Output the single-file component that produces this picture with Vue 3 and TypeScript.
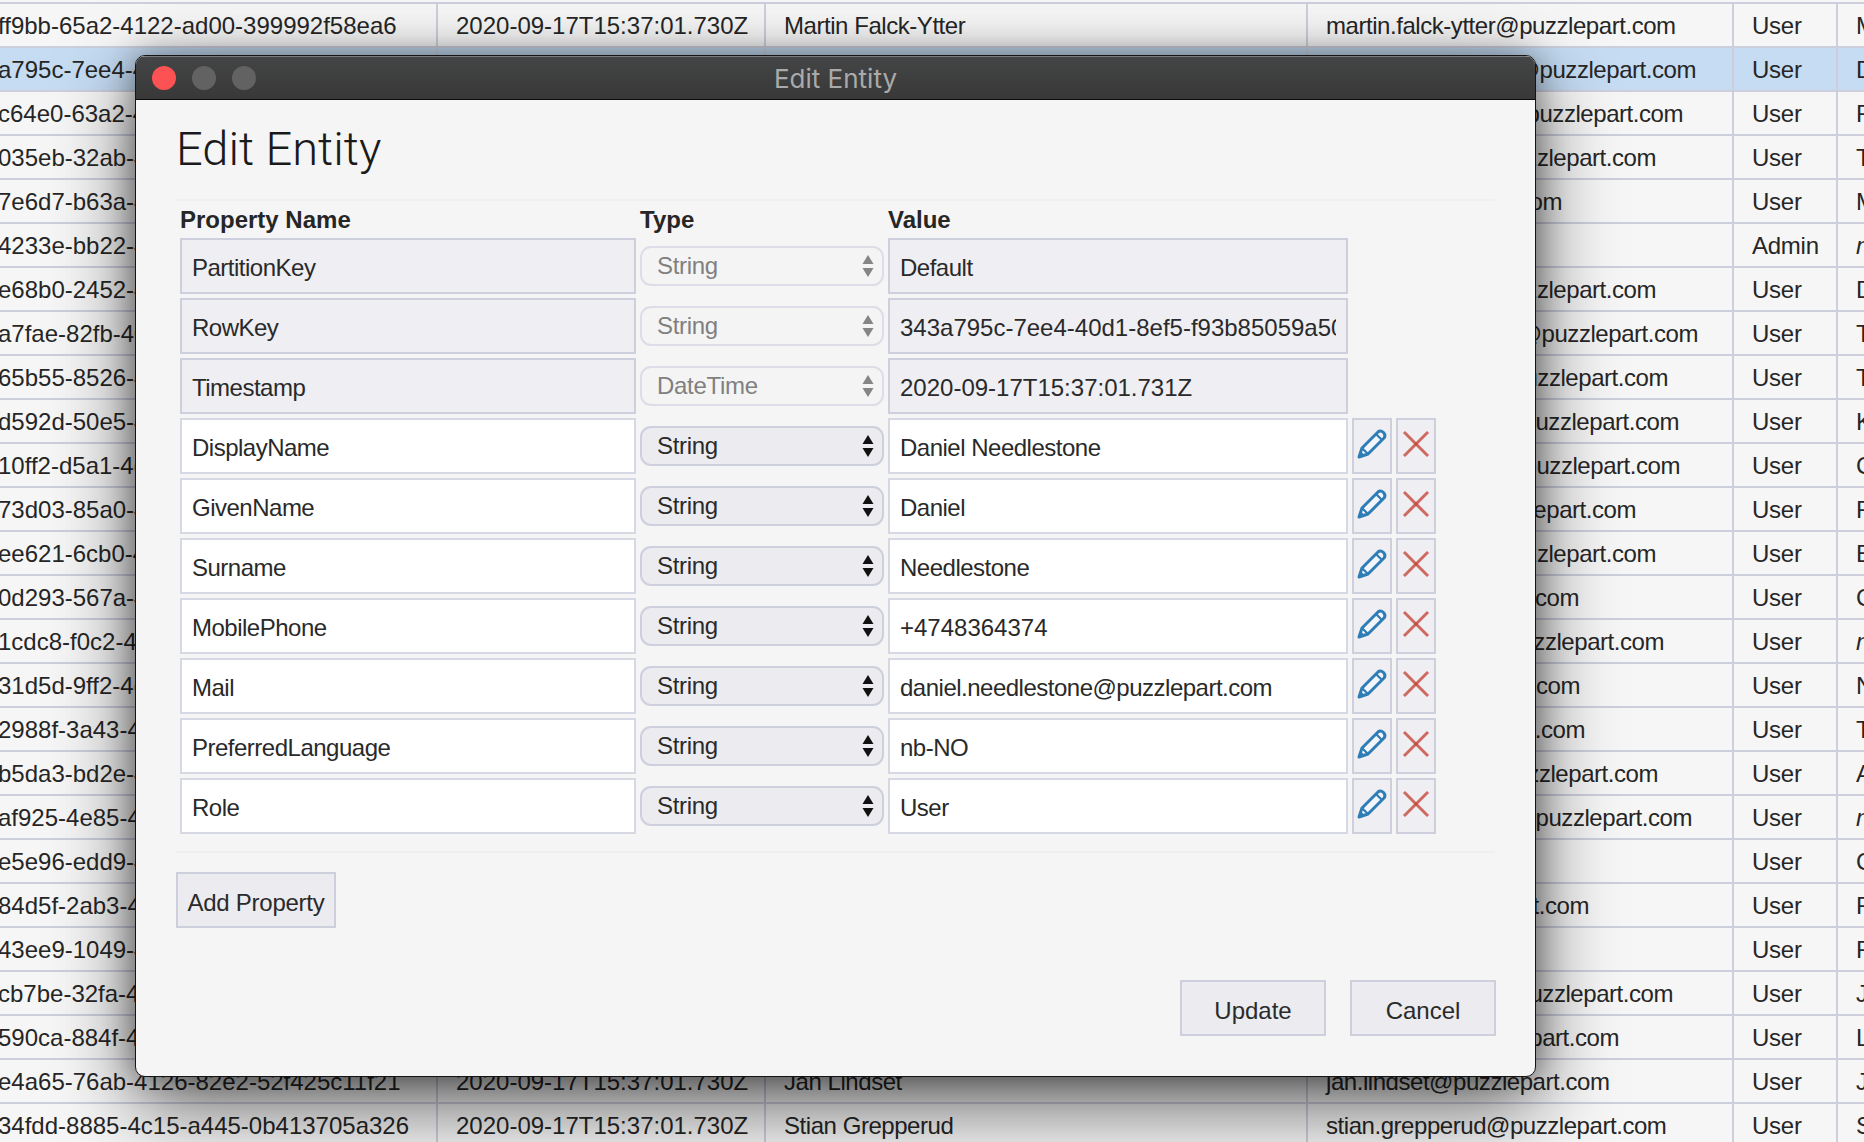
<script setup lang="ts">
interface Row { id: string; name?: string; mail?: string; mailEnd?: number; role?: string; next: string; italic?: boolean }
interface Prop { name: string; type: string; value: string; locked?: boolean; digits?: boolean }

const stamp = "2020-09-17T15:37:01.730Z";
const COL_MAIL_RIGHT = 1732;

// 表格被横向滚动过，第一列只露出 GUID 的后半段；邮箱大多被弹窗挡住，只按右端对齐
const rows: Row[] = [
  { id: "ff9bb-65a2-4122-ad00-399992f58ea6", name: "Martin Falck-Ytter", mail: "martin.falck-ytter@puzzlepart.com", next: "Martin" },
  { id: "a795c-7ee4-40d1", name: "Daniel Needlestone", mail: "@puzzlepart.com", mailEnd: 1696, next: "Daniel" },
  { id: "c64e0-63a2-4d1", mail: "@puzzlepart.com", mailEnd: 1683, next: "F" },
  { id: "035eb-32ab-4d1", mail: "@puzzlepart.com", mailEnd: 1656, next: "T" },
  { id: "7e6d7-b63a-4d1", mail: "@puzzlepart.com", mailEnd: 1562, next: "M" },
  { id: "4233e-bb22-4d1", role: "Admin", next: "null", italic: true },
  { id: "e68b0-2452-4d1", mail: "@puzzlepart.com", mailEnd: 1656, next: "D" },
  { id: "a7fae-82fb-40d", mail: "@puzzlepart.com", mailEnd: 1698, next: "T" },
  { id: "65b55-8526-4d1", mail: "@puzzlepart.com", mailEnd: 1668, next: "T" },
  { id: "d592d-50e5-4d1", mail: "@puzzlepart.com", mailEnd: 1679, next: "K" },
  { id: "10ff2-d5a1-4d1", mail: "@puzzlepart.com", mailEnd: 1680, next: "C" },
  { id: "73d03-85a0-4d1", mail: "@puzzlepart.com", mailEnd: 1636, next: "F" },
  { id: "ee621-6cb0-4d1", mail: "@puzzlepart.com", mailEnd: 1656, next: "E" },
  { id: "0d293-567a-4d1", mail: "@puzzlepart.com", mailEnd: 1579, next: "C" },
  { id: "1cdc8-f0c2-4d1", mail: "@puzzlepart.com", mailEnd: 1664, next: "null", italic: true },
  { id: "31d5d-9ff2-4d1", mail: "@puzzlepart.com", mailEnd: 1580, next: "N" },
  { id: "2988f-3a43-4d1", mail: "@puzzlepart.com", mailEnd: 1585, next: "T" },
  { id: "b5da3-bd2e-4d1", mail: "@puzzlepart.com", mailEnd: 1658, next: "A" },
  { id: "af925-4e85-4d1", mail: "@puzzlepart.com", mailEnd: 1692, next: "null", italic: true },
  { id: "e5e96-edd9-4d1", next: "C" },
  { id: "84d5f-2ab3-4d1", mail: "@puzzlepart.com", mailEnd: 1589, next: "F" },
  { id: "43ee9-1049-4d1", next: "F" },
  { id: "cb7be-32fa-4d1", mail: "@puzzlepart.com", mailEnd: 1673, next: "J" },
  { id: "590ca-884f-4d1", mail: "@puzzlepart.com", mailEnd: 1619, next: "L" },
  { id: "e4a65-76ab-4126-82e2-52f425c11f21", name: "Jan Lindset", mail: "jan.lindset@puzzlepart.com", next: "Jan" },
  { id: "34fdd-8885-4c15-a445-0b413705a326", name: "Stian Grepperud", mail: "stian.grepperud@puzzlepart.com", next: "Stian" },
];

const props: Prop[] = [
  { name: "PartitionKey", type: "String", value: "Default", locked: true },
  { name: "RowKey", type: "String", value: "343a795c-7ee4-40d1-8ef5-f93b85059a50", locked: true, digits: true },
  { name: "Timestamp", type: "DateTime", value: "2020-09-17T15:37:01.731Z", locked: true, digits: true },
  { name: "DisplayName", type: "String", value: "Daniel Needlestone" },
  { name: "GivenName", type: "String", value: "Daniel" },
  { name: "Surname", type: "String", value: "Needlestone" },
  { name: "MobilePhone", type: "String", value: "+4748364374", digits: true },
  { name: "Mail", type: "String", value: "daniel.needlestone@puzzlepart.com" },
  { name: "PreferredLanguage", type: "String", value: "nb-NO" },
  { name: "Role", type: "String", value: "User" },
];

const mailStyle = (r: Row) => (r.mailEnd ? { paddingRight: COL_MAIL_RIGHT - r.mailEnd + "px", textAlign: "right" as const } : {});
</script>

<template>
  <div class="page">
    <table class="grid">
      <colgroup>
        <col style="width: 440px" /><col style="width: 328px" /><col style="width: 542px" />
        <col style="width: 426px" /><col style="width: 104px" /><col style="width: 200px" />
      </colgroup>
      <tbody>
        <tr v-for="(r, i) in rows" :key="r.id" :class="{ selected: i === 1 }">
          <td class="guid">{{ r.id }}</td>
          <td>{{ stamp }}</td>
          <td class="tight">{{ r.name }}</td>
          <td class="tight" :style="mailStyle(r)">{{ r.mail }}</td>
          <td class="role">{{ r.role || "User" }}</td>
          <td :class="{ italic: r.italic }">{{ r.next }}</td>
        </tr>
      </tbody>
    </table>

    <div class="window">
      <div class="titlebar">
        <span class="light red"></span>
        <span class="light"></span>
        <span class="light"></span>
        <span class="wtitle">Edit Entity</span>
      </div>
      <div class="content">
        <h1>Edit Entity</h1>
        <hr />
        <div class="form">
          <div class="th">Property Name</div>
          <div class="th">Type</div>
          <div class="th">Value</div>
          <div class="th"></div>
          <div class="th"></div>
          <template v-for="p in props" :key="p.name">
            <input class="field" :value="p.name" :disabled="p.locked" />
            <div class="selwrap">
              <select class="sel" :disabled="p.locked">
                <option>{{ p.type }}</option>
              </select>
              <svg class="arrows" :class="{ off: p.locked }" width="12" height="22" viewBox="0 0 12 22">
                <path d="M6 0 L11.5 9 L0.5 9 Z" />
                <path d="M0.5 13 L11.5 13 L6 22 Z" />
              </svg>
            </div>
            <input class="field" :class="{ num: p.digits }" :value="p.value" :disabled="p.locked" />
            <template v-if="!p.locked">
              <button class="icon-btn" title="Edit">
                <svg width="32" height="32" viewBox="0 0 32 32">
                  <path class="pencil" d="M3 29 L6 20 L22 4 Q24.5 1.8 27.5 4.5 Q30 7.5 28 10 L12 26 Z" />
                  <path class="pencil-line" d="M6 20 L12 26 M20 6 L26 12" />
                  <path class="pencil-tip" d="M2 30 L4.5 23 L9 27.5 Z" />
                </svg>
              </button>
              <button class="icon-btn" title="Delete">
                <svg width="28" height="28" viewBox="0 0 28 28">
                  <path class="cross" d="M2 2 L26 26" />
                  <path class="cross" d="M26 2 L2 26" />
                </svg>
              </button>
            </template>
            <template v-else><span></span><span></span></template>
          </template>
        </div>
        <hr class="second" />
        <button class="btn add">Add Property</button>
        <div class="footer">
          <button class="btn wide">Update</button>
          <button class="btn wide">Cancel</button>
        </div>
      </div>
    </div>
  </div>
</template>

<style scoped>
.page { position: relative; width: 1864px; height: 1142px; overflow: hidden; background: #f6f6f6;
  font-family: "Liberation Sans", Arial, sans-serif; font-size: 24px; color: #262626; }

/* 底层数据表 */
.grid { table-layout: fixed; width: 2040px; margin: 2px 0 0 -2px; border-collapse: separate; border-spacing: 0;
  border-top: 2px solid #cdcfdd; }
.grid td { box-sizing: border-box; height: 44px; padding: 2px 0 0 18px; border-bottom: 2px solid #cdcfdd; border-right: 2px solid #cdcfdd;
  white-space: nowrap; overflow: hidden; }
.grid td.guid { padding-left: 0; }
.grid td.tight { letter-spacing: -0.45px; }
.grid td.role { letter-spacing: -0.25px; }
.grid td.italic { font-style: italic; }
.grid tr.selected td { background: #c5dcf3; }

/* 弹窗 */
.window { position: absolute; left: 135px; top: 55px; width: 1401px; height: 1022px; box-sizing: border-box;
  display: flex; flex-direction: column; background: #f5f5f5; border: 1px solid #141414; border-radius: 10px;
  box-shadow: 0 28px 80px rgba(0, 0, 0, 0.62), 0 0 30px rgba(0, 0, 0, 0.36); overflow: hidden; }
.titlebar { flex: none; height: 44px; box-sizing: border-box; position: relative; display: flex; align-items: center;
  gap: 16px; padding: 0 0 1px 16px; background: linear-gradient(#444546, #383838);
  border-top: 1px solid #7c7c7c; border-bottom: 1px solid #0c0c0c; }
.light { width: 24px; height: 24px; border-radius: 50%; background: #626262; }
.light.red { background: #fc5253; }
.wtitle { position: absolute; left: 0; right: 0; top: 7px; text-align: center; font-family: Inter, "Liberation Sans", sans-serif;
  font-size: 26px; line-height: 30px; color: #aaaaaa; }

.content { flex: 1; min-height: 0; display: flex; flex-direction: column; padding: 0 39px 40px 40px; }
h1 { margin: 22px 0 0; font-family: Roboto, "Liberation Sans", sans-serif; font-size: 47px; line-height: 54px; font-weight: 300; color: #1a1a1a; }
hr { margin: 23px 0 0; height: 2px; border: 0; background: #efefef; width: 1319px; flex: none; }
hr.second { margin-top: 17px; }

.form { display: grid; grid-template-columns: 456px 244px 460px 40px 40px; gap: 4px; padding: 4px 0 0 4px; }
.th { font-weight: 700; line-height: 29px; height: 29px; }
.field { height: 56px; box-sizing: border-box; width: 100%; padding: 3px 10px 0; border: 2px solid #d6d8e3; border-radius: 0;
  background: #fff; font: inherit; letter-spacing: -0.5px; color: #2a2a2a; outline: none; }
.field.num { letter-spacing: 0; }
.field:disabled { background: #eeeef3; border-color: #cdcfdd; color: #2a2a2a; -webkit-text-fill-color: #2a2a2a; opacity: 1; }
.selwrap { position: relative; display: flex; align-items: center; }
.sel { width: 100%; height: 40px; box-sizing: border-box; padding: 0 30px 2px 15px; appearance: none; border: 2px solid #cdcfdd;
  border-radius: 11px; background: #ebebf0; font: inherit; letter-spacing: -0.3px; color: #2a2a2a; outline: none; }
.sel:disabled { background: #f4f4f5; border-color: #dcdde6; color: #808080; opacity: 1; }
.arrows { position: absolute; right: 10px; top: 17px; fill: #111; pointer-events: none; }
.arrows.off { fill: #858585; }
.icon-btn { height: 56px; width: 40px; box-sizing: border-box; padding: 0 0 4px; display: flex; align-items: center; justify-content: center;
  border: 2px solid #cdcfdd; border-radius: 0; background: #eeeef3; }
.pencil { fill: #f2f5f9; stroke: #2f7db6; stroke-width: 3; stroke-linejoin: round; }
.pencil-line { fill: none; stroke: #2f7db6; stroke-width: 2.2; }
.pencil-tip { fill: #2f7db6; }
.cross { fill: none; stroke: #c4473a; stroke-width: 3; opacity: 0.8; }

.btn { height: 56px; box-sizing: border-box; padding: 5px 0 0; border: 2px solid #cdcfdd; border-radius: 0; background: #ebebf0;
  font: inherit; color: #2a2a2a; white-space: nowrap; }
.add { width: 160px; margin-top: 19px; flex: none; letter-spacing: -0.25px; }
.footer { margin-top: auto; display: flex; justify-content: flex-end; gap: 24px; }
.wide { width: 146px; }
</style>
